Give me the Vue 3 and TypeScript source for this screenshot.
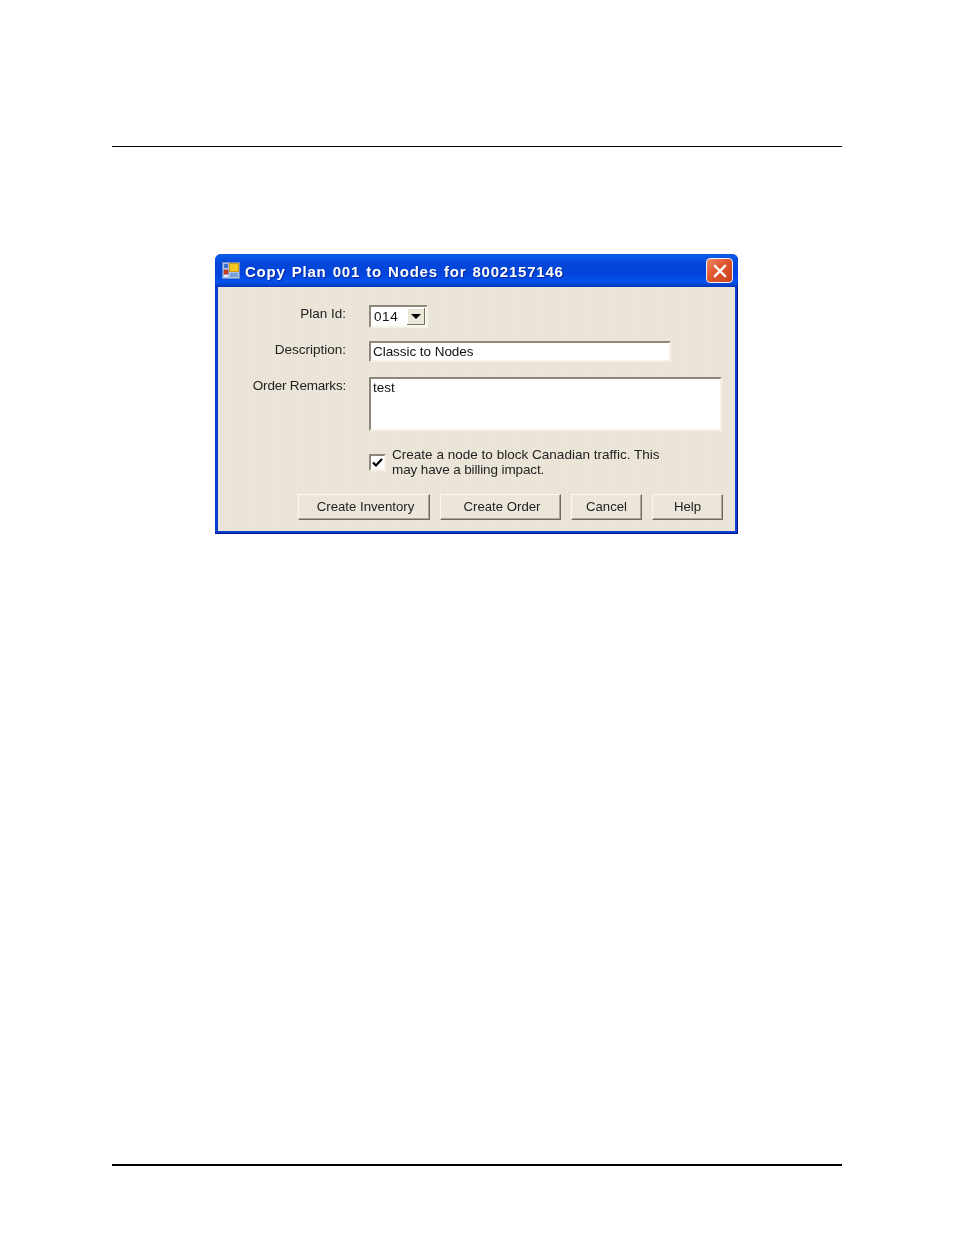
<script setup lang="ts">
const buttons: { label: string; cls: string }[] = [
  { label: 'Create Inventory', cls: 'b1' },
  { label: 'Create Order', cls: 'b2' },
  { label: 'Cancel', cls: 'b3' },
  { label: 'Help', cls: 'b4' },
]
</script>

<template>
  <div class="page">
    <div class="rule-top"></div>
    <section class="dialog">
      <header class="titlebar">
        <svg class="app-icon" width="18" height="17" viewBox="0 0 18 17">
          <rect x="0.5" y="0.5" width="17" height="16" fill="#a9c2ea" stroke="#6f8fc8" />
          <rect x="2" y="2" width="4" height="4" fill="#3f6fc4" />
          <rect x="7.5" y="1.5" width="9" height="8" fill="#f4c820" stroke="#c99a10" />
          <rect x="2" y="8" width="4" height="4" fill="#d63c28" stroke="#a02818" stroke-width="0.6" />
          <rect x="8" y="11" width="8" height="4" fill="#7d9fd8" />
          <rect x="2" y="13" width="4" height="2" fill="#e8eef8" />
        </svg>
        <h1 class="title">Copy Plan 001 to Nodes for 8002157146</h1>
        <button class="close" aria-label="Close">
          <svg width="14" height="14" viewBox="0 0 14 14">
            <path d="M2 2 L12 12 M12 2 L2 12" stroke="#fff" stroke-width="2.4" stroke-linecap="square" fill="none" />
          </svg>
        </button>
      </header>
      <div class="body">
        <div class="form">
          <label class="lbl">Plan Id:</label>
          <div class="combo">
            <span class="combo-val">014</span>
            <span class="combo-btn"><i class="arrow"></i></span>
          </div>
          <label class="lbl">Description:</label>
          <div class="field desc">Classic to Nodes</div>
          <label class="lbl tight">Order Remarks:</label>
          <div class="field remarks">test</div>
          <div></div>
          <div class="check-row">
            <span class="check">
              <svg width="11" height="11" viewBox="0 0 11 11">
                <path d="M1 5.5 L4 8.5 L10 2" stroke="#000" stroke-width="2.2" fill="none" />
              </svg>
            </span>
            <p class="check-text">Create a node to block Canadian traffic. This<br /><span class="line2">may have a billing impact.</span></p>
          </div>
        </div>
        <div class="actions">
          <button v-for="b in buttons" :key="b.label" class="btn" :class="b.cls">{{ b.label }}</button>
        </div>
      </div>
    </section>
    <div class="rule-bottom"></div>
  </div>
</template>

<style>
html, body { margin: 0; background: #fff; }
</style>

<style scoped>
.page {
  width: 954px;
  height: 1235px;
  box-sizing: border-box;
  padding: 146px 112px 0;
  background: #fff;
  font-family: "Liberation Sans", Arial, sans-serif;
}
.rule-top { height: 1px; background: #000; }
.rule-bottom { height: 2px; background: #000; margin-top: 630px; }
.dialog {
  width: 523px;
  height: 280px;
  margin: 107px 0 0 103px;
  box-sizing: border-box;
  display: flex;
  flex-direction: column;
  border-radius: 6px 6px 0 0;
  background: #0a3fd0;
  box-shadow: inset -1px -1px 0 #00138c;
  filter: blur(0.3px);
}
.titlebar {
  height: 33px;
  flex: none;
  display: flex;
  align-items: center;
  padding: 0 5px 0 7px;
  box-sizing: border-box;
  border-radius: 6px 6px 0 0;
  background: linear-gradient(180deg, #0a5ae6 0%, #0a58e8 8%, #0346d8 30%, #0244dc 60%, #0352ec 85%, #0336b8 100%);
}
.app-icon { flex: none; }
.title {
  margin: 2px 0 0 5px;
  flex: 1;
  font-size: 15px;
  font-weight: 700;
  line-height: 18px;
  letter-spacing: 0.78px;
  word-spacing: 1.2px;
  color: #fff;
  text-shadow: 1px 1px 0 #0c2a9c;
  white-space: nowrap;
}
.close {
  width: 27px;
  height: 25px;
  padding: 0;
  display: flex;
  align-items: center;
  justify-content: center;
  border: 1px solid #f0f0f0;
  border-radius: 4px;
  background: linear-gradient(135deg, #ec8a68 0%, #e0552c 45%, #c8401c 100%);
}
.body {
  flex: 1;
  margin: 0 3px 3px;
  padding: 18px 0 11px 0;
  box-sizing: border-box;
  background-color: #ece6da;
  background-image: repeating-linear-gradient(90deg, #ece6da 0, #ece6da 2px, #e9e3d6 2px, #e9e3d6 3px);
  color: #1c1c1c;
  font-size: 13.5px;
}
.form {
  display: grid;
  grid-template-columns: 128px 353px;
  grid-template-rows: 23px 23px 54px 33px;
  column-gap: 23px;
  row-gap: 13px;
}
.lbl {
  text-align: right;
  margin-top: 1px;
  line-height: 16px;
  color: #222;
}
.tight { letter-spacing: -0.2px; }
.combo {
  width: 59px;
  height: 23px;
  box-sizing: border-box;
  display: flex;
  align-items: center;
  justify-content: space-between;
  background: #fff;
  border: 2px solid;
  border-color: #8d8778 #f6f2e8 #f6f2e8 #8d8778;
  padding-right: 1px;
}
.combo-val { padding-left: 3px; letter-spacing: 0.6px; color: #111; }
.combo-btn {
  width: 18px;
  height: 17px;
  display: flex;
  align-items: center;
  justify-content: center;
  background: #ece6da;
  box-shadow: inset -1px -1px 0 #77715f, inset 1px 1px 0 #fff;
}
.arrow {
  width: 0;
  height: 0;
  border-left: 5px solid transparent;
  border-right: 5px solid transparent;
  border-top: 5px solid #000;
}
.field {
  box-sizing: border-box;
  background: #fff;
  border: 2px solid;
  border-color: #8d8778 #f6f2e8 #f6f2e8 #8d8778;
  padding-left: 2px;
  color: #111;
  line-height: 16px;
}
.desc { width: 302px; height: 21px; padding-top: 1px; letter-spacing: -0.05px; }
.remarks { width: 353px; height: 54px; padding-top: 1px; }
.check-row {
  display: flex;
  align-items: center;
  margin-top: 3px;
  height: 30px;
}
.check {
  width: 17px;
  height: 17px;
  margin: 0 6px 0 0;
  flex: none;
  box-sizing: border-box;
  display: flex;
  align-items: center;
  justify-content: center;
  background: #fff;
  border: 2px solid;
  border-color: #8d8778 #f6f2e8 #f6f2e8 #8d8778;
}
.check-text {
  margin: 0;
  line-height: 15px;
  color: #222;
  white-space: nowrap;
  letter-spacing: 0.02px;
}
.line2 { letter-spacing: -0.12px; }
.actions {
  display: flex;
  margin-top: 17px;
  padding-left: 80px;
}
.btn {
  height: 26px;
  flex: none;
  padding: 0 0 2px;
  font: inherit;
  font-size: 13.2px;
  color: #222;
  background: #ece6da;
  border: 1px solid;
  border-color: #fbf9f3 #6f6a5c #6f6a5c #fbf9f3;
  box-shadow: inset -1px -1px 0 #aca696;
}
.b1 { width: 132px; margin-right: 10px; padding-left: 3px; }
.b2 { width: 121px; margin-right: 10px; padding-left: 3px; }
.b3 { width: 71px; margin-right: 10px; }
.b4 { width: 71px; }
</style>
